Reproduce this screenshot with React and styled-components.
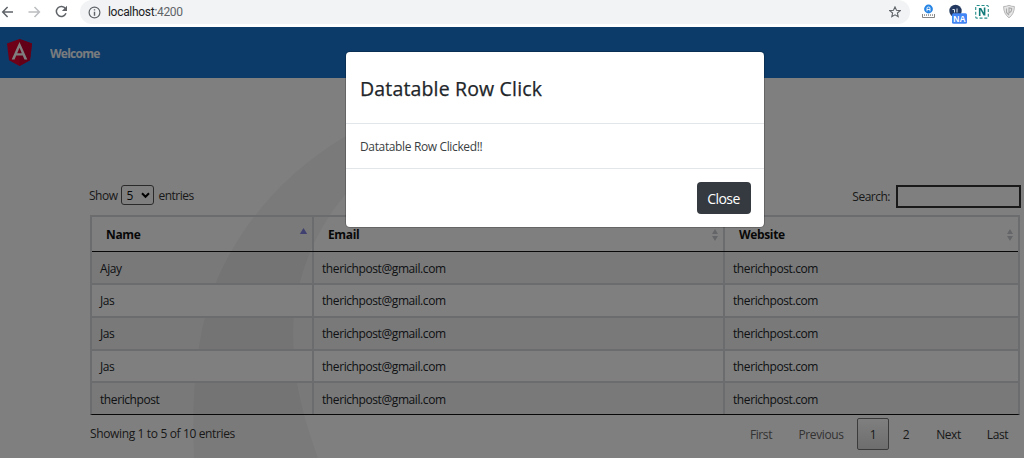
import React from 'react';
import styled, { createGlobalStyle } from 'styled-components';

const Global = createGlobalStyle`
  * { box-sizing: border-box; }
  body { margin: 0; background: #fff; overflow: hidden; }
  body, button, select, input { font-family: "Open Sans", "Noto Sans", sans-serif; }
`;

const Window = styled.div`
  width: 1024px; height: 458px; display: flex; flex-direction: column;
  font-size: 12px; color: #212529; overflow: hidden;
`;

const BrowserBar = styled.header`
  height: 27px; flex: none; display: flex; align-items: flex-start; background: #fff;
`;
const NavIcons = styled.svg`
  width: 80px; height: 27px; flex: none;
`;
const AddressBar = styled.div`
  width: 830px; height: 24px; padding: 0 9px 0 8px; display: flex; align-items: center;
  border-radius: 12px; background: #f1f3f4;
`;
const Url = styled.span`
  flex: 1; margin-left: 7px; font-family: Roboto, sans-serif; font-size: 12px; letter-spacing: -0.3px; color: #202124;
  span { color: #5f6368; }
`;
const Extensions = styled.svg`
  width: 114px; height: 27px; flex: none;
`;

const Page = styled.main`
  position: relative; height: 431px; display: flex; flex-direction: column; background: #fff;
`;
const Backdrop = styled.div`
  position: absolute; inset: 0; display: flex; justify-content: center; align-items: flex-start;
  padding: 25px 0 0 86px; background: rgba(0, 0, 0, 0.5);
`;
const Watermark = styled.svg`
  position: absolute; left: 180px; top: 51px; width: 400px; height: 380px;
`;
const Toolbar = styled.nav`
  height: 51px; flex: none; display: flex; align-items: center; gap: 17px; padding: 1px 0 0 6px;
  background: #1976d2; color: #fff; font-weight: 700; font-size: 12px;
`;
const Welcome = styled.span`
  letter-spacing: -0.75px; opacity: 0.95;
`;

const Content = styled.section`
  position: relative; width: 931px; margin: 106px 0 0 90px;
`;
const Controls = styled.div`
  height: 31px; display: flex; justify-content: space-between;
`;
const Length = styled.label`
  height: 22px; display: flex; align-items: center; gap: 4px; color: #333; letter-spacing: -0.5px;
  margin-left: -1px;
`;
const SelectBox = styled.span`
  width: 33px; height: 20px; display: flex; align-items: center; justify-content: space-between;
  padding: 0 3px 0 4px; border: 1px solid #555; border-radius: 3px; color: #111;
`;
const Search = styled.label`
  height: 25px; display: flex; align-items: center; gap: 6px; color: #333; letter-spacing: -0.5px;
`;
const SearchInput = styled.input`
  width: 125px; height: 23px; border: 2px solid #333; border-radius: 0; background: transparent; padding: 0 4px;
`;

const Table = styled.div`
  width: 930px; height: 200px; border: 2px solid #d6d9dd; border-bottom: 1px solid #111;
`;
const Row = styled.div`
  display: grid; grid-template-columns: 222px 411px 1fr; height: 31px;
  background: ${p => (p.$odd ? 'rgba(0,0,0,0.05)' : '#fff')};
  & + & { height: 32.75px; border-top: 2px solid #d6d9dd; }
`;
const HeadRow = styled.div`
  display: grid; grid-template-columns: 222px 411px 1fr; height: 35px; border-bottom: 1px solid #111;
`;
const Cell = styled.div`
  display: flex; align-items: center; padding: 1px 0 0 8px; letter-spacing: -0.41px;
  border-right: 2px solid #d6d9dd;
  &:last-child { border-right: 0; }
`;
const HeadCell = styled(Cell)`
  justify-content: space-between; padding: 1px 4px 0 14px; font-weight: 700; color: #111; letter-spacing: -0.35px;
`;

const Footer = styled.div`
  display: flex; justify-content: space-between; align-items: flex-start; color: #333;
`;
const Info = styled.span`
  margin-top: 10px; line-height: 18px; letter-spacing: -0.36px;
`;
const Pager = styled.div`
  display: flex; margin-top: 3px;
`;
const PageButton = styled.span`
  width: ${p => p.$w}px; height: 32px; display: flex; align-items: center; justify-content: center;
  padding-top: 1px; letter-spacing: -0.4px; border: 1px solid ${p => (p.$active ? '#777' : 'transparent')};
  border-radius: 2px; color: ${p => (p.$disabled ? '#666' : '#333')};
  background: ${p => (p.$active ? 'linear-gradient(#fff, #dcdcdc)' : 'transparent')};
`;

const Modal = styled.div`
  width: 418px; height: 175px; background: #fff; border-radius: 4px; display: flex; flex-direction: column;
  box-shadow: 0 0 0 1px rgba(0, 0, 0, 0.2);
`;
const ModalHeader = styled.h4`
  height: 72px; margin: 0; padding: 1px 14px 0; display: flex; align-items: center; border-bottom: 1px solid #e3e6e9;
  font-size: 19.5px; font-weight: 500; letter-spacing: 0.16px; color: #212529;
  -webkit-text-stroke: 0.25px #212529;
`;
const ModalBody = styled.div`
  height: 45px; padding: 0 14px; display: flex; align-items: center; border-bottom: 1px solid #e3e6e9;
  color: #3b3f43; letter-spacing: -0.36px;
`;
const ModalFooter = styled.div`
  flex: 1; display: flex; align-items: flex-start; justify-content: flex-end; padding: 13px 13.5px 0;
`;
const CloseButton = styled.button`
  width: 54px; height: 32px; padding: 0; border: 0; border-radius: 4px; background: #343a40; color: #fff;
  font-size: 14px; letter-spacing: -0.6px;
`;

const SortBoth = () => (
  <svg width="8" height="12" viewBox="0 0 8 12"><path d="M4 0 7 5H1ZM1 7h6L4 12Z" fill="#c9cbd0" /></svg>
);
const SortUp = () => (
  <svg width="9" height="14" viewBox="0 0 9 14"><path d="M4.5 0 8.2 6H.8Z" fill="#8080e0" /></svg>
);

const names = ['Ajay', 'Jas', 'Jas', 'Jas', 'therichpost'];

export default function App() {
  return (
    <Window>
      <Global />
      <BrowserBar>
        <NavIcons viewBox="0 0 80 27" fill="none" stroke="#5f6368" strokeWidth="1.5">
          <path d="M13 12H3M7.6 7 2.7 12l4.9 5" />
          <path d="M28.5 12h10.5M34.5 7l4.9 5-4.9 5" stroke="#bbbdc0" />
          <path d="M65.5 8.6A5 5 0 1 0 66 13.3" />
          <path d="M67 5.8v5.1h-5.1Z" fill="#5f6368" stroke="none" />
        </NavIcons>
        <AddressBar>
          <svg width="13" height="13" viewBox="0 0 13 13" fill="none" stroke="#5f6368" strokeWidth="1.2">
            <circle cx="6.5" cy="6.5" r="5.4" /><path d="M6.5 5.7v4M6.5 3.2v1.4" strokeWidth="1.4" />
          </svg>
          <Url>localhost<span>:4200</span></Url>
          <svg width="12" height="12" viewBox="0 0 12 12" fill="none" stroke="#5f6368" strokeWidth="1.1">
            <path d="m6 .9 1.5 3.4 3.7.3-2.8 2.4.8 3.7L6 8.8l-3.2 1.9.8-3.7L.8 4.6l3.7-.3Z" />
          </svg>
        </AddressBar>
        <Extensions viewBox="910 0 114 27">
          <circle cx="928.5" cy="9" r="4.4" fill="#2583e4" />
          <path d="M927 11.3V8q0-1 1.5-1t1.5 1v3.3M927 9.5h3" stroke="#fff" fill="none" strokeWidth=".9" />
          <path d="M922.5 14v3.5h12V14M924.5 14.3v1.5M926.5 14.3v1.5M928.5 14.3v1.5M930.5 14.3v1.5M932.5 14.3v1.5" stroke="#777" fill="none" strokeWidth=".9" />
          <circle cx="955.5" cy="11" r="6.2" fill="#24395f" />
          <path d="M952.5 9.5h2v3M957 8.5v4" stroke="#dce5f2" fill="none" />
          <rect x="952" y="13.3" width="15" height="10.5" rx="1.5" fill="#4285f4" />
          <text x="959.5" y="21.8" fill="#fff" fontSize="8.5" fontWeight="700" textAnchor="middle" fontFamily="Liberation Sans">NA</text>
          <rect x="975.7" y="5.5" width="12.6" height="12.6" rx="1" fill="none" stroke="#258e8b" strokeWidth="1.1" strokeDasharray="3 1.8" />
          <path d="M979.7 16V8.7h1l3.3 6h.6V7.5" fill="none" stroke="#137c7a" strokeWidth="1.6" />
          <path d="M1009 5.3q3 1.4 5.4 1.2-.1 7.6-5.4 11.3-5.3-3.7-5.4-11.3 2.4.2 5.4-1.2Z" fill="#e6e6e6" stroke="#b8b8b8" />
          <path d="M1006.5 8.5v4l2.5 2.5M1009 8v5q3-1.5 2.7-4.5Z" fill="none" stroke="#aaa" strokeWidth="1.1" />
        </Extensions>
      </BrowserBar>
      <Page>
        <Watermark viewBox="180 78 400 380">
          <path d="M450 96Q390 109 344 137Q255 191 216 282Q189 350 194 458H318Q301 410 297 382Q288 320 300 282Q312 235 345 195L450 140Z" fill="#f5f5f5" />
        </Watermark>
        <Toolbar>
          <svg width="27" height="28" viewBox="0 0 27 28">
            <path d="M13.5 0 26 4.4 24 21.2 13.5 27 3 21.2 1 4.4Z" fill="#dd0031" />
            <path d="M13.5 0 26 4.4 24 21.2 13.5 27Z" fill="#c3002f" />
            <path d="M13.5 3 5.7 20.5h2.9l1.6-3.9h6.6l1.6 3.9h2.9ZM15.8 14.2h-4.6L13.5 8.7Z" fill="#fff" />
          </svg>
          <Welcome>Welcome</Welcome>
        </Toolbar>
        <Content>
          <Controls>
            <Length>
              Show
              <SelectBox>5
                <svg width="9" height="7" viewBox="0 0 9 7"><path d="m1 1.3 3.5 3.5L8 1.3" fill="none" stroke="#000" strokeWidth="2" /></svg>
              </SelectBox>
              entries
            </Length>
            <Search>Search: <SearchInput aria-label="Search" /></Search>
          </Controls>
          <Table>
            <HeadRow>
              <HeadCell>Name<SortUp /></HeadCell>
              <HeadCell>Email<SortBoth /></HeadCell>
              <HeadCell>Website<SortBoth /></HeadCell>
            </HeadRow>
            {names.map((name, i) => (
              <Row key={i} $odd={i % 2 === 0}>
                <Cell>{name}</Cell>
                <Cell>therichpost@gmail.com</Cell>
                <Cell>therichpost.com</Cell>
              </Row>
            ))}
          </Table>
          <Footer>
            <Info>Showing 1 to 5 of 10 entries</Info>
            <Pager>
              <PageButton $w={48} $disabled>First</PageButton>
              <PageButton $w={72} $disabled>Previous</PageButton>
              <PageButton $w={32} $active>1</PageButton>
              <PageButton $w={34}>2</PageButton>
              <PageButton $w={51}>Next</PageButton>
              <PageButton $w={47}>Last</PageButton>
            </Pager>
          </Footer>
        </Content>
        <Backdrop>
          <Modal role="dialog">
            <ModalHeader>Datatable Row Click</ModalHeader>
            <ModalBody>Datatable Row Clicked!!</ModalBody>
            <ModalFooter><CloseButton>Close</CloseButton></ModalFooter>
          </Modal>
        </Backdrop>
      </Page>
    </Window>
  );
}
